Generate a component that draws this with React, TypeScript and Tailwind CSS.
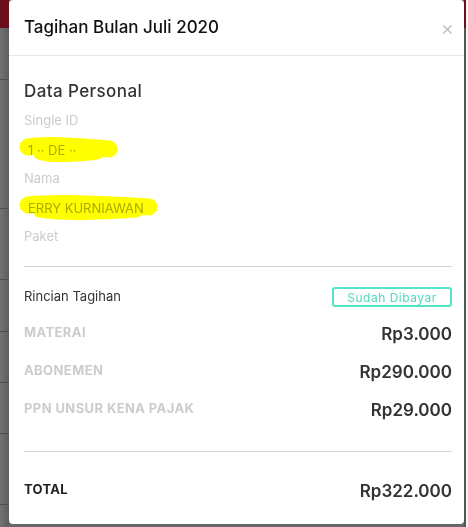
import React from "react";

function Scribble({ width }: { width: number }) {
  return (
    <svg
      className="pointer-events-none absolute left-[-5px] top-[-7px] mix-blend-multiply"
      width={width + 12}
      height={34}
      viewBox={`0 0 ${width + 12} 34`}
    >
      <path
        d={`M9 14 C ${width * 0.3} 11, ${width * 0.6} 13, ${width + 2} 16`}
        stroke="#ffff00"
        strokeWidth={17}
        strokeLinecap="round"
        fill="none"
      />
      <path
        d={`M20 21 C ${width * 0.35} 25, ${width * 0.6} 24, ${width - 10} 21`}
        stroke="#ffff00"
        strokeWidth={11}
        strokeLinecap="round"
        fill="none"
      />
    </svg>
  );
}

const leftSegments = [
  "h-[28px] bg-[#6b0f1c]",
  "h-[52px] border-b border-[#4f4f4f]",
  "h-[129px] border-b border-[#4f4f4f]",
  "h-[71px] border-b border-[#4f4f4f]",
  "h-[52px] border-b border-[#4f4f4f]",
  "h-[51px] border-b border-[#4f4f4f]",
  "h-[51px] border-b border-[#4f4f4f]",
  "h-[71px] border-b border-[#4f4f4f]",
];

export default function App() {
  const rows = [
    { label: "MATERAI", value: "Rp3.000" },
    { label: "ABONEMEN", value: "Rp290.000" },
    { label: "PPN UNSUR KENA PAJAK", value: "Rp29.000" },
  ];
  return (
    <div
      className="flex h-[527px] w-[468px] overflow-hidden bg-[#676767]"
      style={{ fontFamily: "Inter, 'Noto Sans', sans-serif" }}
    >
      {/* left backdrop strip */}
      <div className="flex w-[9px] shrink-0 flex-col bg-gradient-to-r from-[#727272] to-[#5e5e5e]">
        {leftSegments.map((c, i) => (
          <div key={i} className={c} />
        ))}
      </div>

      {/* modal */}
      <div className="flex h-[524px] w-[455px] shrink-0 flex-col rounded-[4px] bg-white">
        <div className="flex h-[56px] items-center justify-between border-b border-[#e6e6e6] pl-[15px] pr-[10px]">
          <div className="text-[17px] font-medium text-[#111]">Tagihan Bulan Juli 2020</div>
          <div className="text-[20px] leading-none text-[#c4c4c4]">×</div>
        </div>

        <div className="flex flex-col pl-[15px] pr-[12px]">
          <div className="mt-[23px] h-[24px] text-[17px] font-medium leading-[24px] tracking-[0.4px] text-[#333]">
            Data Personal
          </div>
          <div className="mt-[7px] h-[20px] text-[13px] leading-[20px] text-[#cccccc]">Single ID</div>
          <div className="relative mt-[10px] h-[20px] text-[13px] leading-[20px] text-[#aaa]">
            <span className="pl-[4px]">1 ·· DE ··</span>
            <Scribble width={88} />
          </div>
          <div className="mt-[8px] h-[20px] text-[13px] leading-[20px] text-[#cccccc]">Nama</div>
          <div className="relative mt-[10px] h-[20px] text-[13px] leading-[20px] text-[#aaa]">
            <span className="pl-[4px]">ERRY KURNIAWAN</span>
            <Scribble width={128} />
          </div>
          <div className="mt-[8px] h-[20px] text-[13px] leading-[20px] text-[#cccccc]">Paket</div>

          <div className="mt-[20px] h-px bg-[#d4d4d4]" />

          <div className="mt-[19px] flex h-[21px] items-center justify-between">
            <div className="text-[13px] text-[#333]">Rincian Tagihan</div>
            <div className="flex h-[20px] w-[120px] items-center justify-center rounded-[3px] border-2 border-[#55e3c8] pt-[2px] text-[12px] tracking-[0.5px] text-[#4fd8bd]">
              Sudah Dibayar
            </div>
          </div>

          <div className="mt-[15px] flex flex-col gap-[14px]">
            {rows.map((r) => (
              <div key={r.label} className="flex items-start justify-between">
                <div className="text-[13px] font-bold leading-[20px] tracking-[0.4px] text-[#cccccc]">
                  {r.label}
                </div>
                <div className="text-[17px] font-semibold leading-[24px] text-[#333]">{r.value}</div>
              </div>
            ))}
          </div>

          <div className="mt-[29px] h-px bg-[#d4d4d4]" />

          <div className="mt-[27px] flex items-start justify-between">
            <div className="text-[13px] font-bold leading-[20px] tracking-[0.3px] text-[#222]">TOTAL</div>
            <div className="text-[17px] font-semibold leading-[24px] text-[#333]">Rp322.000</div>
          </div>
        </div>
      </div>

      {/* right backdrop strip */}
      <div className="flex w-[2px] shrink-0 flex-col">
        <div className="h-[28px] bg-[#6b0f1c]" />
        <div className="flex-1 bg-[#555]" />
      </div>
      <div className="w-[2px] shrink-0 bg-[#f4f4f4]" />
    </div>
  );
}
